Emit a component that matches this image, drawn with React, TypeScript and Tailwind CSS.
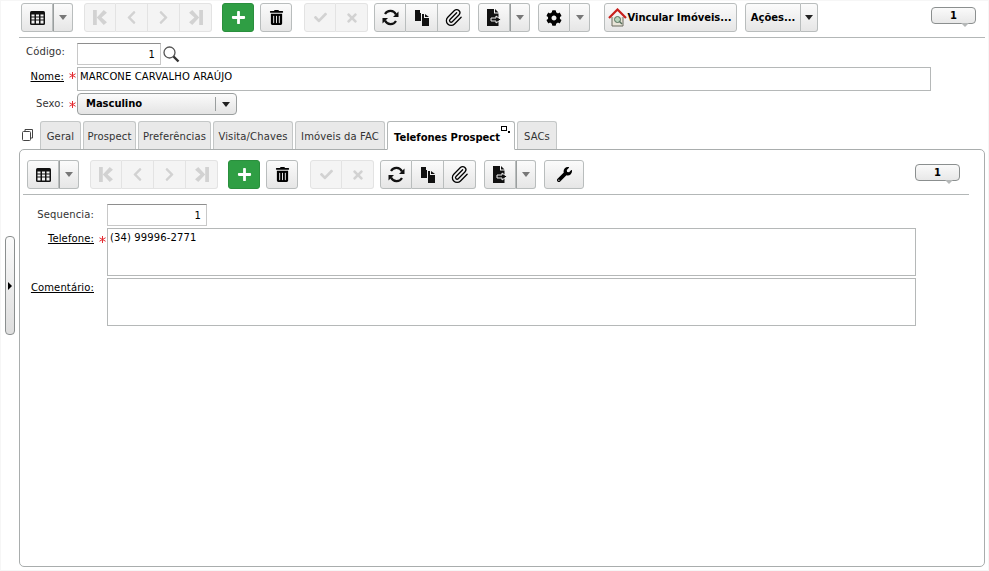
import React from "react";
import { Paperclip } from "lucide-react";
import { FaCheck, FaChevronLeft, FaChevronRight, FaCog, FaPlus, FaTimes, FaTrashAlt, FaWrench } from "react-icons/fa";

const btnBase = "flex items-center justify-center h-[29px] border border-[#b9bdbd] bg-gradient-to-b from-[#fbfbfb] to-[#e6e6e6] text-black";
const offBase = "flex items-center justify-center h-[29px] border border-[#e3e3e3] bg-[#f4f4f4] text-[#d2d2d2]";

function GridIcon() {
  return (
    <svg width="15" height="14" viewBox="0 0 15 14">
      <rect x="0" y="0" width="15" height="14" rx="1.5" fill="#111" />
      <g fill="#f2f2f2">
        <rect x="1.5" y="3.5" width="3" height="2" /><rect x="6" y="3.5" width="3" height="2" /><rect x="10.5" y="3.5" width="3" height="2" />
        <rect x="1.5" y="6.5" width="3" height="2" /><rect x="6" y="6.5" width="3" height="2" /><rect x="10.5" y="6.5" width="3" height="2" />
        <rect x="1.5" y="9.5" width="3" height="3" /><rect x="6" y="9.5" width="3" height="3" /><rect x="10.5" y="9.5" width="3" height="3" />
      </g>
    </svg>
  );
}

function FirstIcon({ flip }: { flip?: boolean }) {
  return (
    <svg width="14" height="15" viewBox="0 0 13 14" className={flip ? "-scale-x-100" : ""} fill="#d2d2d2">
      <rect x="0" y="0" width="3.5" height="14" />
      <path d="M10 0 L13 2.5 L8 7 L13 11.5 L10 14 L3.5 7 Z" />
    </svg>
  );
}

function RefreshIcon() {
  return (
    <svg width="17" height="17" viewBox="0 0 17 17" fill="none">
      <path d="M14 5.5 A6.2 6.2 0 0 0 3 5" stroke="#111" strokeWidth="2.2" />
      <path d="M3 11.5 A6.2 6.2 0 0 0 14 12" stroke="#111" strokeWidth="2.2" />
      <path d="M16.5 2.5 V8 H11 Z" fill="#111" />
      <path d="M0.5 14.5 V9 H6 Z" fill="#111" />
    </svg>
  );
}

function CopyIcon() {
  return (
    <svg width="14" height="16" viewBox="0 0 14 16" fill="#111">
      <path d="M0 0 H5 V3 H6 V11 H0 Z" />
      <path d="M7 4 H9 V8 H14 V16 H7 Z" />
      <path d="M10 4 L14 7 H10 Z" />
    </svg>
  );
}

function ExportIcon() {
  return (
    <svg width="15" height="17" viewBox="0 0 15 17">
      <path d="M0 0 H7 V4.5 H11.5 V17 H0 Z" fill="#111" />
      <path d="M8 0 L11.5 3.5 H8 Z" fill="#111" />
      <path d="M4 9 H9 V7 L14 10.5 L9 14 V12 H4 Z" fill="#111" stroke="#f0f0f0" strokeWidth="1" />
    </svg>
  );
}

function SearchIcon() {
  return (
    <svg width="17" height="17" viewBox="0 0 17 17" fill="none" className="ml-[2px]">
      <circle cx="6.5" cy="6.5" r="5.5" stroke="#555" strokeWidth="1.3" />
      <path d="M10.5 10.5 L15.5 15.5" stroke="#333" strokeWidth="2.4" />
    </svg>
  );
}

function Caret({ dark }: { dark?: boolean }) {
  return <span className={`w-0 h-0 border-x-[4px] border-x-transparent border-t-[5px] ${dark ? "border-t-[#222]" : "border-t-[#777]"}`} />;
}

function HouseIcon() {
  return (
    <svg width="19" height="19" viewBox="0 0 19 19">
      <path d="M4 9 V18 H15 V9" fill="#e8e4d8" stroke="#6b6b5e" strokeWidth="1" />
      <path d="M1 10 L9.5 1.5 L18 10" fill="none" stroke="#c8201c" strokeWidth="2.2" />
      <circle cx="9.5" cy="11.5" r="3" fill="#b8d4bc" stroke="#55705c" strokeWidth="1" />
      <path d="M11.5 13.5 L14 16" stroke="#55705c" strokeWidth="1.4" />
    </svg>
  );
}

function Badge() {
  return (
    <div className="relative flex items-center justify-center w-[45px] h-[17px] rounded-[4px] border border-[#8b8f8f] bg-gradient-to-b from-[#fafafa] to-[#e8e8e8] font-bold text-[10px] text-black">
      1
      <span className="absolute -bottom-[4px] left-[29px] w-0 h-0 border-x-[4px] border-x-transparent border-t-[4px] border-t-[#b5b8b8]" />
    </div>
  );
}

function Toolbar({ inner }: { inner?: boolean }) {
  return (
    <div className="flex items-center h-[29px]">
      <div className={`${btnBase} w-[32px] rounded-l-[3px]`}><GridIcon /></div>
      <div className={`${btnBase} w-[20px] rounded-r-[3px] border-l-[#9a9e9e] bg-gradient-to-b from-[#efefef] to-[#d8d8d8]`}><Caret /></div>

      <div className="flex ml-[11px]">
        <div className={`${offBase} w-[32px] rounded-l-[3px]`}><FirstIcon /></div>
        <div className={`${offBase} w-[32px] border-l-0`}><FaChevronLeft size={15} /></div>
        <div className={`${offBase} w-[32px] border-l-0`}><FaChevronRight size={15} /></div>
        <div className={`${offBase} w-[32px] border-l-0 rounded-r-[3px]`}><FirstIcon flip /></div>
      </div>

      <div className="flex items-center justify-center ml-[10px] w-[32px] h-[29px] rounded-[3px] bg-[#2f9e44] border border-[#2a8f3d] text-white"><FaPlus size={15} /></div>
      <div className={`${btnBase} ml-[6px] w-[32px] rounded-[3px]`}><FaTrashAlt size={15} /></div>

      <div className="flex ml-[12px]">
        <div className={`${offBase} w-[32px] rounded-l-[3px]`}><FaCheck size={13} /></div>
        <div className={`${offBase} w-[32px] border-l-0 rounded-r-[3px]`}><FaTimes size={14} /></div>
      </div>

      <div className="flex ml-[6px]">
        <div className={`${btnBase} w-[32px] rounded-l-[3px]`}><RefreshIcon /></div>
        <div className={`${btnBase} w-[32px] border-l-0`}><CopyIcon /></div>
        <div className={`${btnBase} w-[32px] border-l-0 rounded-r-[3px]`}><Paperclip size={19} strokeWidth={1.6} /></div>
      </div>

      <div className={`${btnBase} ml-[8px] w-[32px] rounded-l-[3px] bg-gradient-to-b from-[#f0f0f0] to-[#e0e0e0]`}><ExportIcon /></div>
      <div className={`${btnBase} w-[20px] rounded-r-[3px] border-l-[#9a9e9e] bg-gradient-to-b from-[#efefef] to-[#d8d8d8]`}><Caret /></div>

      {inner ? (
        <div className={`${btnBase} ml-[8px] w-[40px] rounded-[3px]`}><FaWrench size={15} /></div>
      ) : (
        <>
          <div className={`${btnBase} ml-[8px] w-[32px] rounded-l-[3px]`}><FaCog size={16} /></div>
          <div className={`${btnBase} w-[20px] rounded-r-[3px] border-l-0`}><Caret /></div>
          <div className={`${btnBase} ml-[14px] w-[133px] rounded-[3px] gap-[1px] pr-[2px] font-bold text-[10px] tracking-[-0.05px]`}><HouseIcon />Vincular Imóveis...</div>
          <div className={`${btnBase} ml-[8px] w-[56px] rounded-l-[3px] font-bold text-[10px] tracking-[-0.05px]`}>Ações...</div>
          <div className={`${btnBase} w-[17px] rounded-r-[3px] border-l-0`}><Caret dark /></div>
        </>
      )}
      <div className="ml-auto -mt-[5px]"><Badge /></div>
    </div>
  );
}

function Req() {
  return (
    <span className="flex items-center justify-end w-[13px] h-[16px] pr-[1px]">
      <svg width="7" height="7" viewBox="0 0 8 8" stroke="#e3242b" strokeWidth="1.1">
        <path d="M4 0 V8 M0.5 2 L7.5 6 M7.5 2 L0.5 6" />
      </svg>
    </span>
  );
}

function Tab({ label, width, active }: { label: string; width: string; active?: boolean }) {
  if (active) {
    return (
      <div className={`relative flex items-center justify-center ${width} h-[29px] -mb-px z-10 pt-[3px] pr-[8px] rounded-t-[3px] border border-[#b3b7b7] border-b-white bg-white font-bold text-black text-[10px] tracking-[-0.05px]`}>
        {label}
        <span className="absolute top-[4px] right-[7px] w-[6px] h-[5px] border border-black" />
        <span className="absolute top-[9px] right-[4px] w-[2px] h-[2px] bg-black" />
      </div>
    );
  }
  return (
    <div className={`flex items-center justify-center ${width} h-[28px] pt-[2px] rounded-t-[3px] border border-b-0 border-[#c4c7c7] bg-[#e9e9e9] text-[#333] text-[10px]`}>
      {label}
    </div>
  );
}

export default function App() {
  return (
    <div className="relative w-[989px] h-[571px] bg-white text-[#333] text-[10px] tracking-[0.12px] overflow-hidden shadow-[inset_0_0_0_1px_#f6f6f6]" style={{ fontFamily: '"DejaVu Sans", Verdana, sans-serif' }}>
      {/* top toolbar */}
      <div className="ml-[19px] w-[966px] h-[38px] pt-[3px] pl-[2px] pr-[9px] border-b border-[#b3b7b7]">
        <Toolbar />
      </div>

      {/* form head */}
      <div className="flex flex-col pt-[5px]">
        <div className="flex items-center h-[22px]">
          <span className="w-[65px] text-right -mt-[6px]">Código:</span>
          <span className="w-[12px]" />
          <div className="flex items-center justify-end w-[84px] h-[22px] pr-[5px] border border-[#c8c8c8] border-t-[#8e8e8e] text-black">1</div>
          <SearchIcon />
        </div>
        <div className="flex items-start h-[24px] mt-[2px]">
          <span className="w-[64px] text-right underline text-black pt-[2px]">Nome:</span>
          <Req />
          <div className="w-[854px] h-[24px] px-[2px] pt-[1px] border border-[#b5b8b8] text-black">MARCONE CARVALHO ARAÚJO</div>
        </div>
        <div className="flex items-center h-[22px] mt-[2px]">
          <span className="w-[64px] text-right -mt-[2px]">Sexo:</span>
          <Req />
          <div className="flex items-center w-[160px] h-[22px] pl-[8px] rounded-[4px] border border-[#9a9e9e] bg-gradient-to-b from-[#fbfbfb] to-[#e4e4e4] font-bold text-black tracking-[-0.05px]">
            <span className="flex-1 -mt-[2px]">Masculino</span>
            <span className="flex items-center justify-center w-[21px] h-[14px] border-l border-[#9a9e9e]"><Caret dark /></span>
          </div>
        </div>
      </div>

      {/* tabs */}
      <div className="flex items-end h-[28px] ml-[22px] mt-[6px] gap-[2px]">
        <svg width="11" height="12" viewBox="0 0 11 12" className="mb-[8px] mr-[5px]" fill="none" stroke="#444" strokeWidth="1">
          <rect x="0.5" y="2.5" width="8" height="9" rx="1" />
          <path d="M3 2.5 V0.5 H10.5 V9 H8.5" />
        </svg>
        <Tab label="Geral" width="w-[41px]" />
        <Tab label="Prospect" width="w-[53px]" />
        <Tab label="Preferências" width="w-[73px]" />
        <Tab label="Visita/Chaves" width="w-[80px]" />
        <Tab label="Imóveis da FAC" width="w-[90px]" />
        <Tab label="Telefones Prospect" width="w-[128px]" active />
        <Tab label="SACs" width="w-[40px]" />
      </div>

      {/* panel */}
      <div className="ml-[19px] w-[966px] h-[418px] rounded-[5px] border border-[#a9adad]">
        <div className="ml-[3px] w-[946px] h-[45px] pt-[10px] pl-[4px] pr-[9px] border-b border-[#b3b7b7]">
          <Toolbar inner />
        </div>
        <div className="flex flex-col pt-[9px]">
          <div className="flex items-start h-[22px]">
            <span className="w-[74px] text-right pt-[3px]">Sequencia:</span>
            <span className="w-[13px]" />
            <div className="flex items-center justify-end w-[100px] h-[22px] pr-[5px] border border-[#c8c8c8] border-t-[#8e8e8e] text-black">1</div>
          </div>
          <div className="flex items-start h-[48px] mt-[2px]">
            <span className="w-[74px] text-right underline text-black pt-[3px]">Telefone:</span>
            <span className="pt-[3px]"><Req /></span>
            <div className="w-[809px] h-[48px] px-[2px] pt-[1px] border border-[#b5b8b8] text-black">(34) 99996-2771</div>
          </div>
          <div className="flex items-start h-[48px] mt-[2px]">
            <span className="w-[74px] text-right underline text-black pt-[2px]">Comentário:</span>
            <span className="w-[13px]" />
            <div className="w-[809px] h-[48px] border border-[#b5b8b8]" />
          </div>
        </div>
      </div>

      {/* side collapse handle */}
      <div className="absolute left-[5px] top-[236px] flex items-center justify-center w-[10px] h-[99px] rounded-[4px] border border-[#8b8f8f] bg-gradient-to-b from-[#fbfbfb] to-[#dedede]">
        <span className="w-0 h-0 border-y-[4px] border-y-transparent border-l-[4px] border-l-black" />
      </div>
    </div>
  );
}
